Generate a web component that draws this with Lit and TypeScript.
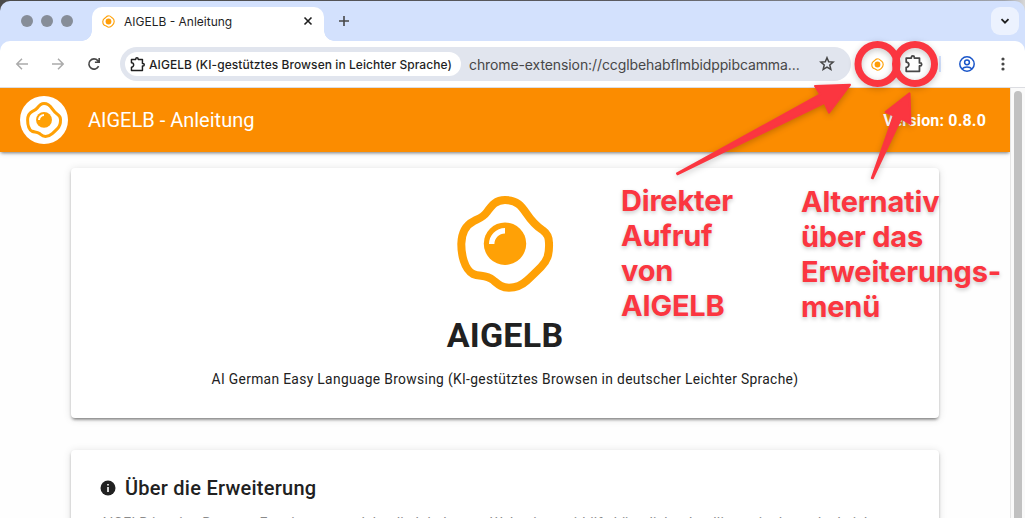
import { LitElement, html, svg, css } from "lit";
import { customElement } from "lit/decorators.js";

const PUZZLE = svg`<path d="M4 5H9.800V4.200A1.700 1.700 0 0 1 13.200 4.200V5H19V10.500H19.800A1.700 1.700 0 0 1 19.800 13.900H19V20H4V15.500A3 3 0 0 0 4 9.500Z" fill="none" stroke="currentColor" stroke-width="2" stroke-linejoin="round"/>`;

@customElement("egg-icon")
class EggIcon extends LitElement {
  static styles = css`
    :host { display: block; }
    svg { display: block; width: 100%; height: 100%; overflow: visible; }
  `;
  render() {
    return html`<svg viewBox="0 0 96 96">
      <path d="M48 4C60 4 64.500 10 69.500 17.500C74.500 25 79 30 86 34.500C91 38 92 42 92 47C92.500 59 90 65 84 71C79 76 75 80 70 84.500C64 90 59 91.700 52 91.700C44 91.500 41 88 36 84C29 78.500 23 81 16 78C7 73 4.300 58 4.300 48C4.500 36 9 29 17 25C22 22.500 26 21.500 30 16C35 9 39 4 48 4Z" fill="#fff" stroke="#ffa106" stroke-width="8"/>
      <circle cx="48" cy="47.700" r="21.200" fill="#ffa106"/>
      <path d="M34.700 48A13.300 13.300 0 0 1 48 34.700" fill="none" stroke="#fff" stroke-width="5.400"/>
    </svg>`;
  }
}

@customElement("mini-egg")
class MiniEgg extends LitElement {
  static styles = css`
    :host { display: block; width: 13px; height: 13px; }
    svg { display: block; width: 100%; height: 100%; }
  `;
  render() {
    return html`<svg viewBox="0 0 13 13">
      <path d="M6.500.8C8.500.7 9.300 2.200 10.500 3.100C12 4.100 12.200 5 12.200 6.600C12.200 8.600 11 9.600 10 10.600C9 11.800 8.200 12.200 6.800 12.200C5.200 12.200 5 11.100 3.600 10.800C1.600 10.400.8 8.400.8 6.500C.8 4.500 1.700 3.800 3 3C4.200 2.300 4.600.8 6.500.8Z" fill="none" stroke="#ffa106" stroke-width="1.150"/>
      <circle cx="6.500" cy="6.500" r="2.900" fill="#ff9d08"/>
    </svg>`;
  }
}

@customElement("app-root")
class AppRoot extends LitElement {
  static styles = css`
    :host {
      display: block; position: relative; box-sizing: border-box;
      width: 1025px; height: 518px; padding-top: 1px; overflow: hidden;
      background: linear-gradient(90deg, #4b4b4b 0, #5a5a60 60%, #a0a4ac 98%, #d8d8d8 100%);
      font-family: Roboto, "Liberation Sans", sans-serif; color: #212121;
    }
    svg { display: block; flex: none; }
    .window { display: flex; flex-direction: column; height: 517px; background: #d3e1fd; border-radius: 10px 10px 0 0; overflow: hidden; }
    .strip { display: flex; height: 40px; flex: none; font-family: Inter, sans-serif; }
    .lights { display: flex; gap: 8px; padding: 14px 0 0 21px; width: 71px; }
    .light { width: 12px; height: 12px; border-radius: 50%; background: #868d98; }
    .tab { position: relative; display: flex; align-items: center; width: 232px; height: 34px; margin-top: 6px; box-sizing: border-box; padding: 0 11px 6px 10px; border-radius: 10px 10px 0 0; background: #fff; }
    .tab::before, .tab::after { content: ""; position: absolute; bottom: 0; width: 10px; height: 10px; }
    .tab::before { right: 100%; background: radial-gradient(circle at 0 0, transparent 9.500px, #fff 10px); }
    .tab::after { left: 100%; background: radial-gradient(circle at 100% 0, transparent 9.500px, #fff 10px); }
    .tab-title { flex: 1; margin-left: 9px; font-size: 12px; color: #1f1f1f; }
    .plus { margin: 14px 0 0 14px; }
    .drop { display: flex; align-items: center; justify-content: center; width: 28px; height: 28px; margin: 6px 6px 0 auto; border-radius: 9px; background: #ecf2fe; }
    .toolbar { display: flex; align-items: center; height: 46px; flex: none; box-sizing: border-box; background: #fff; border-radius: 10px 10px 0 0; padding-left: 14px; font-family: Inter, sans-serif; }
    .nav { display: flex; gap: 20px; width: 106px; }
    .omnibox { display: flex; align-items: center; box-sizing: border-box; width: 731px; height: 34px; padding: 0 15px 0 5px; border-radius: 17px; background: #e1e5ee; }
    .chip { display: flex; align-items: center; width: 336px; height: 24px; box-sizing: border-box; padding-left: 5px; border-radius: 12px; background: #fff; color: #1f1f1f; }
    .chip-text { margin-left: 4px; font-size: 12px; font-weight: 500; letter-spacing: .065px; white-space: nowrap; }
    .url { flex: 1; margin-left: 8px; font-size: 14px; letter-spacing: -.1px; color: #474747; white-space: nowrap; }
    .actions { display: flex; align-items: center; flex: 1; }
    .ext { margin-left: 20px; }
    .puzzle { margin-left: 20px; color: #474747; }
    .divider { width: 2px; height: 16px; margin-left: 16px; background: #d3e1fd; }
    .profile { margin-left: 17px; }
    .dots { margin-left: 24px; }
    .viewport { display: flex; flex: 1; min-height: 0; border-top: 1px solid #dcdde2; background: #fefefe; }
    .page { flex: 1; height: 430px; overflow: hidden; }
    .bar { display: flex; align-items: center; height: 64px; box-sizing: border-box; padding: 0 24px 0 20px; background: #fb8c00; color: #fff; box-shadow: 0 2px 3px -1px rgba(0,0,0,.45), 0 1px 6px rgba(0,0,0,.12); }
    .avatar { display: flex; align-items: center; justify-content: center; width: 48px; height: 48px; border-radius: 50%; background: #fff; }
    .avatar egg-icon { width: 36px; height: 36px; }
    .bar-title { margin-left: 20px; flex: 1; font-size: 20px; }
    .version { font-size: 16px; font-weight: 700; letter-spacing: .17px; }
    .cards { display: flex; flex-direction: column; gap: 32px; padding: 16px 71px 0; }
    .card { box-sizing: border-box; border-radius: 4px; background: #fff; box-shadow: 0 3px 3px -2px rgba(0,0,0,.35), 0 2px 3px rgba(0,0,0,.2), 0 1px 8px rgba(0,0,0,.12); }
    .hero { display: flex; flex-direction: column; align-items: center; height: 250px; padding-top: 28px; }
    .hero egg-icon { width: 96px; height: 96px; }
    .name { margin: 22px 0 0; font-size: 34px; line-height: 42px; font-weight: 700; letter-spacing: .25px; }
    .sub { margin: 11px 0 0; font-size: 13.800px; line-height: 24px; letter-spacing: .34px; white-space: nowrap; }
    .about { height: 300px; padding: 22px 29px; }
    .about-head { display: flex; align-items: center; gap: 9px; height: 32px; margin: 0; font-size: 20px; font-weight: 500; letter-spacing: .25px; }
    .about-text { margin: 7px 0 0; font-size: 14px; line-height: 24px; letter-spacing: .25px; color: #8a8a8a; }
    .scroll { width: 15px; box-sizing: border-box; padding: 3px 3px 0; border-left: 1px solid #e6e6e6; background: #fafafa; }
    .thumb { height: 500px; width: 8px; border-radius: 4px; background: #c1c1c1; }
    .marks { position: absolute; left: 0; top: 0; filter: drop-shadow(0 2px 3px rgba(0,0,0,.22)); }
    .note { position: absolute; margin: 0; font: 700 29px/35px Inter, sans-serif; letter-spacing: -.2px; color: #fb3640; white-space: nowrap; text-shadow: 0 2px 4px rgba(0,0,0,.22); }
    .direct { left: 621px; top: 183px; }
    .menu { left: 801px; top: 184px; }
  `;

  render() {
    return html`
      <div class="window">
        <div class="strip">
          <div class="lights"><span class="light"></span><span class="light"></span><span class="light"></span></div>
          <div class="tab">
            <mini-egg></mini-egg>
            <span class="tab-title">AIGELB - Anleitung</span>
            <svg width="10" height="10" viewBox="0 0 10 10"><path d="M1.500 1.500L8.500 8.500M8.500 1.500L1.500 8.500" stroke="#1f1f1f" stroke-width="1.600"/></svg>
          </div>
          <svg class="plus" width="12" height="12" viewBox="0 0 12 12"><path d="M6 1V11M1 6H11" stroke="#474747" stroke-width="1.600"/></svg>
          <div class="drop"><svg width="10" height="10" viewBox="0 0 10 10"><path d="M1.500 3.200L5 6.700L8.500 3.200" fill="none" stroke="#1f1f1f" stroke-width="1.800"/></svg></div>
        </div>
        <div class="toolbar">
          <div class="nav">
            <svg width="16" height="16" viewBox="0 0 16 16"><path d="M14 8H3M8 2.800L2.800 8L8 13.200" fill="none" stroke="#ababab" stroke-width="1.500"/></svg>
            <svg width="16" height="16" viewBox="0 0 16 16"><path d="M2 8H13M8 2.800L13.200 8L8 13.200" fill="none" stroke="#ababab" stroke-width="1.500"/></svg>
            <svg width="16" height="16" viewBox="0 0 16 16"><path d="M12.600 10.200A5.100 5.100 0 1 1 11.800 4.600L13 5.900M13.200 2V6.300H8.900" fill="none" stroke="#474747" stroke-width="1.600"/></svg>
          </div>
          <div class="omnibox">
            <div class="chip">
              <svg width="15" height="15" viewBox="2 1.500 20.500 20.500">${PUZZLE}</svg>
              <span class="chip-text">AIGELB (KI-gestütztes Browsen in Leichter Sprache)</span>
            </div>
            <span class="url">chrome-extension://ccglbehabflmbidppibcamma...</span>
            <svg width="18" height="18" viewBox="0 0 24 24"><path d="M12 3.600L14.300 9L20.200 9.500L15.700 13.400L17.100 19.200L12 16.100L6.900 19.200L8.300 13.400L3.800 9.500L9.700 9Z" fill="none" stroke="#474747" stroke-width="2"/></svg>
          </div>
          <div class="actions">
            <mini-egg class="ext"></mini-egg>
            <svg class="puzzle" width="19" height="19" viewBox="1.500 1.500 21.500 21.500">${PUZZLE}</svg>
            <span class="divider"></span>
            <svg class="profile" width="18" height="18" viewBox="0 0 18 18"><g fill="none" stroke="#1a56c9" stroke-width="1.500"><circle cx="9" cy="9" r="7.200"/><circle cx="9" cy="7.300" r="2.400"/><path d="M3.900 14C6.500 11.300 11.500 11.300 14.100 14"/></g></svg>
            <svg class="dots" width="6" height="16" viewBox="0 0 6 16" fill="#474747"><circle cx="3" cy="3" r="1.600"/><circle cx="3" cy="8" r="1.600"/><circle cx="3" cy="13" r="1.600"/></svg>
          </div>
        </div>
        <div class="viewport">
          <div class="page">
            <header class="bar">
              <div class="avatar"><egg-icon></egg-icon></div>
              <span class="bar-title">AIGELB - Anleitung</span>
              <span class="version">Version: 0.8.0</span>
            </header>
            <main class="cards">
              <section class="card hero">
                <egg-icon></egg-icon>
                <h1 class="name">AIGELB</h1>
                <p class="sub">AI German Easy Language Browsing (KI-gestütztes Browsen in deutscher Leichter Sprache)</p>
              </section>
              <section class="card about">
                <h2 class="about-head">
                  <svg width="16" height="16" viewBox="0 0 16 16"><circle cx="8" cy="8" r="7.500" fill="#212121"/><path d="M8 7V12M8 4V5.600" stroke="#fff" stroke-width="1.600"/></svg>
                  Über die Erweiterung
                </h2>
                <p class="about-text">AIGELB ist eine Browser-Erweiterung, welche die Inhalte von Webseiten mithilfe künstlicher Intelligenz in deutsche Leichte Sprache übersetzt.</p>
              </section>
            </main>
          </div>
          <div class="scroll"><div class="thumb"></div></div>
        </div>
      </div>
      <svg class="marks" width="1025" height="200" viewBox="0 0 1025 200">
        <g fill="none" stroke="#fb3640" stroke-width="7"><circle cx="877.500" cy="64" r="19.500"/><circle cx="915" cy="64" r="19.500"/></g>
        <g fill="#fb3640" stroke="#fb3640" stroke-width="2" stroke-linejoin="round">
          <path d="M850 84.800L829 112.700L824.500 102.800L677.500 174.300L677 173.300L820.300 94.500L815 86Z"/>
          <path d="M909.500 93.300L910.500 124L901 118.500L872.800 178.300L871.800 178L893.800 115.500L885.500 112Z"/>
        </g>
      </svg>
      <p class="note direct">Direkter<br>Aufruf<br>von<br>AIGELB</p>
      <p class="note menu">Alternativ<br>über das<br>Erweiterungs-<br>menü</p>
    `;
  }
}
